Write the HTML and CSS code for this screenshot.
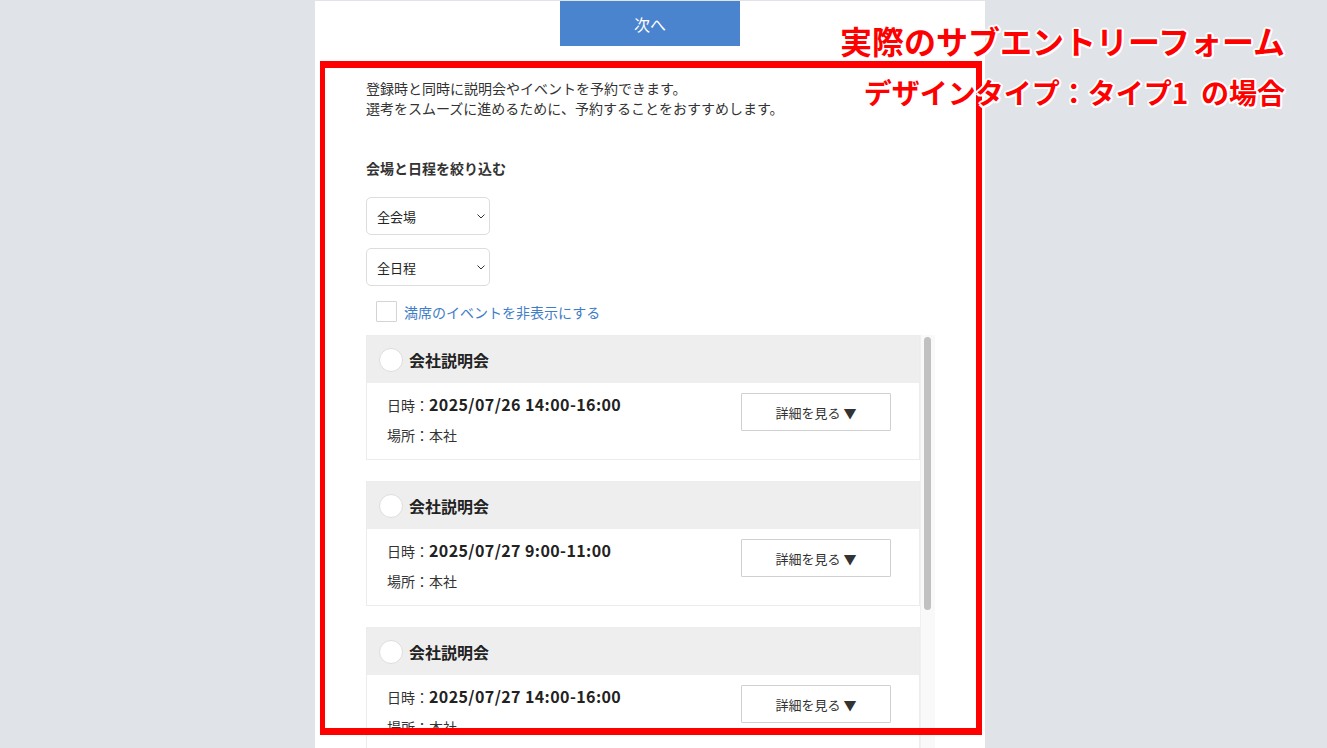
FILE: index.html
```html
<html><head>
<meta charset="utf-8">
<link rel="stylesheet" href="styles.css">
</head>
<body>
<div class="sheet">
    <button class="next-btn">次へ</button>
    <div class="form">
        <p class="intro">登録時と同時に説明会やイベントを予約できます。<br>選考をスムーズに進めるために、予約することをおすすめします。</p>
        <h3 class="filter-title">会場と日程を絞り込む</h3>
        <div class="select">
            <span>全会場</span>
            <svg class="chevron" viewBox="0 0 8 5" fill="none" stroke="#333" stroke-width="1"><path d="M0.5 0.5L4 4L7.5 0.5"></path></svg>
        </div>
        <div class="select">
            <span>全日程</span>
            <svg class="chevron" viewBox="0 0 8 5" fill="none" stroke="#333" stroke-width="1"><path d="M0.5 0.5L4 4L7.5 0.5"></path></svg>
        </div>
        <label class="check-row">
            <span class="checkbox"></span>
            <span class="check-label">満席のイベントを非表示にする</span>
        </label>

        <div class="list-wrap">
            <div class="event-list">
                <div class="event">
                    <div class="event-head"><span class="radio"></span><span class="event-name">会社説明会</span></div>
                    <div class="event-body">
                        <div class="event-info">
                            <div class="when">日時：<b>2025/07/26 14:00-16:00</b></div>
                            <div class="where">場所：本社</div>
                        </div>
                        <button class="detail-btn">詳細を見る ▼</button>
                    </div>
                </div>
                <div class="event">
                    <div class="event-head"><span class="radio"></span><span class="event-name">会社説明会</span></div>
                    <div class="event-body">
                        <div class="event-info">
                            <div class="when">日時：<b>2025/07/27 9:00-11:00</b></div>
                            <div class="where">場所：本社</div>
                        </div>
                        <button class="detail-btn">詳細を見る ▼</button>
                    </div>
                </div>
                <div class="event">
                    <div class="event-head"><span class="radio"></span><span class="event-name">会社説明会</span></div>
                    <div class="event-body">
                        <div class="event-info">
                            <div class="when">日時：<b>2025/07/27 14:00-16:00</b></div>
                            <div class="where">場所：本社</div>
                        </div>
                        <button class="detail-btn">詳細を見る ▼</button>
                    </div>
                </div>
                <div class="event">
                    <div class="event-head"><span class="radio"></span><span class="event-name">会社説明会</span></div>
                    <div class="event-body">
                        <div class="event-info">
                            <div class="when">日時：<b>2025/07/28 14:00-16:00</b></div>
                            <div class="where">場所：本社</div>
                        </div>
                        <button class="detail-btn">詳細を見る ▼</button>
                    </div>
                </div>
            </div>
            <div class="scroll-track"><div class="scroll-thumb"></div></div>
        </div>
    </div>
</div>

<div class="frame"></div>
<div class="caption">
    <div class="caption-main">実際のサブエントリーフォーム</div>
    <div class="caption-sub">デザインタイプ：タイプ1&nbsp; の場合</div>
</div>
</body>
</html>
```

FILE: styles.css
```css
body {
    margin: 0;
    height: 748px;
    overflow: hidden;
    background: #e0e3e7;
    font-family: "Noto Sans CJK JP", "Noto Sans", sans-serif;
    color: #333;
}

.sheet {
    width: 670px;
    min-height: 748px;
    margin-left: 315px;
    background: #fff;
}

.next-btn {
    display: block;
    width: 180px;
    height: 45px;
    margin: 1px 0 0 245px;
    border: none;
    background: #4a84cf;
    color: #fff;
    font-family: inherit;
    font-size: 16px;
}

.form {
    padding: 0 50px 0 51px;
}

.intro {
    margin: 32px 0 0;
    font-size: 14px;
    line-height: 20px;
}

.filter-title {
    margin: 40px 0 0;
    font-size: 14px;
    line-height: 20px;
    font-weight: bold;
}

.select {
    box-sizing: border-box;
    display: flex;
    align-items: center;
    justify-content: space-between;
    width: 124px;
    height: 38px;
    margin-top: 19px;
    padding: 0 4px 0 10px;
    border: 1px solid #ddd;
    border-radius: 5px;
    font-size: 13px;
    line-height: 1;
    color: #222;
}

.select + .select {
    margin-top: 13px;
}

.chevron {
    width: 8px;
    height: 5px;
}

.check-row {
    display: flex;
    align-items: center;
    margin: 15px 0 0 10px;
}

.checkbox {
    box-sizing: border-box;
    width: 21px;
    height: 21px;
    border: 1px solid #d4d4d4;
    border-radius: 1px;
}

.check-label {
    margin-left: 7px;
    font-size: 14px;
    color: #3f7dc6;
}

.list-wrap {
    display: flex;
    height: 440px;
    margin-top: 13px;
}

.event-list {
    flex: 1;
    overflow: hidden;
}

.event {
    border: 1px solid #ececec;
    margin-bottom: 21px;
}

.event-head {
    display: flex;
    align-items: center;
    height: 47px;
    padding-left: 12px;
    background: #eeeeee;
}

.radio {
    box-sizing: border-box;
    width: 24px;
    height: 24px;
    border: 1px solid #ddd;
    border-radius: 50%;
    background: #fff;
}

.event-name {
    margin-left: 6px;
    font-size: 16px;
    font-weight: bold;
    color: #222;
}

.event-body {
    display: flex;
    justify-content: space-between;
    padding: 10px 28px 13px 20px;
}

.when, .where {
    height: 22px;
    line-height: 22px;
    font-size: 14px;
    color: #333;
}

.when b {
    font-size: 16px;
    font-weight: 600;
    letter-spacing: 0.4px;
    color: #222;
}

.where {
    margin-top: 9px;
}

.detail-btn {
    width: 150px;
    height: 38px;
    border: 1px solid #d0d0d0;
    border-radius: 1px;
    background: #fff;
    font-family: inherit;
    font-size: 13px;
    color: #333;
}

.scroll-track {
    width: 15px;
    background: #f9f9f9;
    border-left: 1px solid #f0f0f0;
    box-sizing: border-box;
}

.scroll-thumb {
    width: 7px;
    height: 273px;
    margin: 2px 0 0 3px;
    border-radius: 4px;
    background: #c1c1c1;
}

/* annotation overlay */
.frame {
    position: absolute;
    left: 320px;
    top: 61px;
    width: 662px;
    height: 674px;
    box-sizing: border-box;
    border: solid #fe0000;
    border-width: 7px 6px 7px 5px;
}

.caption {
    position: absolute;
    top: 20px;
    right: 42px;
    text-align: right;
    color: #fe0000;
    font-weight: bold;
    text-shadow: 2px 0 #fff, -2px 0 #fff, 0 2px #fff, 0 -2px #fff,
        1.5px 1.5px #fff, -1.5px 1.5px #fff, 1.5px -1.5px #fff, -1.5px -1.5px #fff;
}

.caption-main {
    font-size: 32px;
    line-height: 40px;
}

.caption-sub {
    margin-top: 15px;
    font-size: 28px;
    line-height: 34px;
}
```
